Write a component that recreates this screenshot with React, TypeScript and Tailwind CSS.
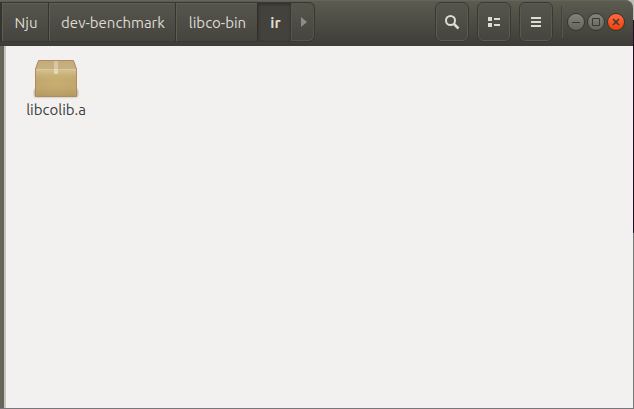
import type { ReactNode } from 'react'

const parents = [
  { name: 'Nju', width: 'w-12' },
  { name: 'dev-benchmark', width: 'w-[127px]' },
  { name: 'libco-bin', width: 'w-[82px]' },
]

const files = [{ name: 'libcolib.a' }]

function PackageIcon() {
  return (
    <svg width="46" height="42" viewBox="0 0 46 42" aria-hidden="true">
      <defs>
        <linearGradient id="lid" x1="0" y1="0" x2="0" y2="1">
          <stop offset="0" stopColor="#c3ab7c" />
          <stop offset="1" stopColor="#d3bf92" />
        </linearGradient>
        <radialGradient id="front" cx=".5" cy=".55" r=".7">
          <stop offset="0" stopColor="#c8af70" />
          <stop offset="1" stopColor="#bca36d" />
        </radialGradient>
        <linearGradient id="shade" x1="0" y1="0" x2="0" y2="1">
          <stop offset="0" stopColor="#d8c698" />
          <stop offset=".45" stopColor="#c8af70" stopOpacity="0" />
          <stop offset="1" stopColor="#a98a57" stopOpacity=".5" />
        </linearGradient>
        <filter id="soft" x="-10%" y="-30%" width="120%" height="160%">
          <feGaussianBlur stdDeviation="1" />
        </filter>
      </defs>
      <rect x="1" y="31" width="44" height="8" rx="2" fill="#77736b" opacity=".6" filter="url(#soft)" />
      <path d="M5.5 2.5h35l3 8.5v27.5h-41V11z" fill="url(#lid)" />
      <path d="M2.5 11h41v27.5h-41z" fill="url(#front)" />
      <path d="M2.5 11h41v27.5h-41z" fill="url(#shade)" />
      <path d="M5.5 2.5h35l3 8.5v27.5h-41V11z" fill="none" stroke="#b18b5b" />
      <path d="M3 11.5h40" stroke="#ddcca2" opacity=".7" />
      <path d="M21 3h4v8h-4z" fill="#eadfc5" opacity=".5" />
      <path d="M21 11h4v5h-4z" fill="#eadfc5" opacity=".8" />
    </svg>
  )
}

function ToolButton({ label, children }: { label: string; children: ReactNode }) {
  return (
    <button
      type="button"
      aria-label={label}
      className="flex h-10 w-[34px] items-center justify-center rounded-md border border-[#393934] bg-linear-to-b from-[#56554d] to-[#45443f] text-[#dfdbd2] inset-ring inset-ring-[#5b5a52]"
    >
      {children}
    </button>
  )
}

function WindowButton({ label, close = false, children }: { label: string; close?: boolean; children: ReactNode }) {
  return (
    <button
      type="button"
      aria-label={label}
      className={`flex size-[18px] items-center justify-center rounded-full border border-[#35342f] ${
        close ? 'bg-linear-to-b from-[#ff6a3c] to-[#f04000]' : 'bg-linear-to-b from-[#85847c] to-[#65645d]'
      }`}
    >
      <svg width="16" height="16" viewBox="0 0 16 16" fill="none" stroke="#3a3935" aria-hidden="true">
        {children}
      </svg>
    </button>
  )
}

function PathBar() {
  return (
    <nav
      aria-label="Location"
      className="flex h-10 overflow-hidden rounded-r-md border border-l-0 border-[#393934] bg-linear-to-b from-[#56554d] to-[#45443f] text-[15px] text-[#dfdbd2]"
    >
      {parents.map((folder) => (
        <button
          key={folder.name}
          type="button"
          className={`${folder.width} border-l border-[#35342f] pt-0.5 pl-0.5 inset-shadow-[1px_1px_#5f5e55] first:border-l-2`}
        >
          {folder.name}
        </button>
      ))}
      <button
        type="button"
        aria-current="page"
        className="w-[34px] border-l border-[#302f2b] bg-[#43423d] pt-0.5 pl-0.5 font-bold inset-shadow-[0_1px_3px_#2d2c29]"
      >
        ir
      </button>
      <button
        type="button"
        aria-label="Next folder"
        className="flex w-[23px] items-center justify-center rounded-r-md pl-0.5 text-[#8e8d85] inset-ring inset-ring-[#55544c]"
      >
        <svg width="6" height="10" viewBox="0 0 6 10" fill="currentColor" aria-hidden="true">
          <path d="M0 0l6 5-6 5z" />
        </svg>
      </button>
    </nav>
  )
}

export default function App() {
  return (
    <div className="flex h-screen flex-col bg-[linear-gradient(#bdbcba_5%,#270a25_5%_57%,#77767a_57%)] pr-px pb-px font-['Ubuntu','Open_Sans','Noto_Sans',sans-serif]">
      <header className="flex h-[46px] shrink-0 items-start justify-between rounded-tr-lg bg-linear-to-b from-[#5d5c50] to-[#3d3c38] pt-0.5 pr-2 shadow-[inset_0_1px_#65645a]">
        <PathBar />
        <div className="flex items-center">
          <div className="flex gap-2">
            <ToolButton label="Search">
              <svg width="16" height="16" viewBox="0 0 16 16" fill="none" stroke="currentColor" strokeWidth="2" aria-hidden="true">
                <circle cx="6.5" cy="6.5" r="4.5" />
                <path d="M10 10l4.5 4.5" strokeWidth="2.5" />
              </svg>
            </ToolButton>
            <ToolButton label="List view">
              <svg width="16" height="16" viewBox="0 0 16 16" fill="currentColor" aria-hidden="true">
                <path d="M2 3h4v4H2zM2 9h4v4H2zM8 4h6v2H8zM8 10h6v2H8z" />
              </svg>
            </ToolButton>
            <ToolButton label="Menu">
              <svg width="16" height="16" viewBox="0 0 16 16" fill="currentColor" aria-hidden="true">
                <path d="M3 3h10v2H3zM3 7h10v2H3zM3 11h10v2H3z" />
              </svg>
            </ToolButton>
          </div>
          <div className="ml-2 h-8 w-0.5 border-l border-[#42413b] bg-[#56554d]" />
          <div className="ml-1 flex gap-0.5">
            <WindowButton label="Minimize">
              <path d="M4 8.5h8" />
            </WindowButton>
            <WindowButton label="Maximize">
              <path d="M4.5 4.5h7v7h-7z" />
            </WindowButton>
            <WindowButton label="Close" close>
              <path d="M5 5l6 6M11 5l-6 6" strokeWidth="1.5" />
            </WindowButton>
          </div>
        </div>
      </header>
      <main className="grow border-l-4 border-[#66655a] bg-[#f2f1f0]">
        <ul className="flex h-full flex-wrap content-start border-l-2 border-[#c5c4c1] px-2 pt-3">
          {files.map((file) => (
            <li key={file.name}>
              <button type="button" className="flex w-[84px] flex-col items-center text-[15px] leading-5 text-[#3c3c3c]">
                <PackageIcon />
                {file.name}
              </button>
            </li>
          ))}
        </ul>
      </main>
    </div>
  )
}
